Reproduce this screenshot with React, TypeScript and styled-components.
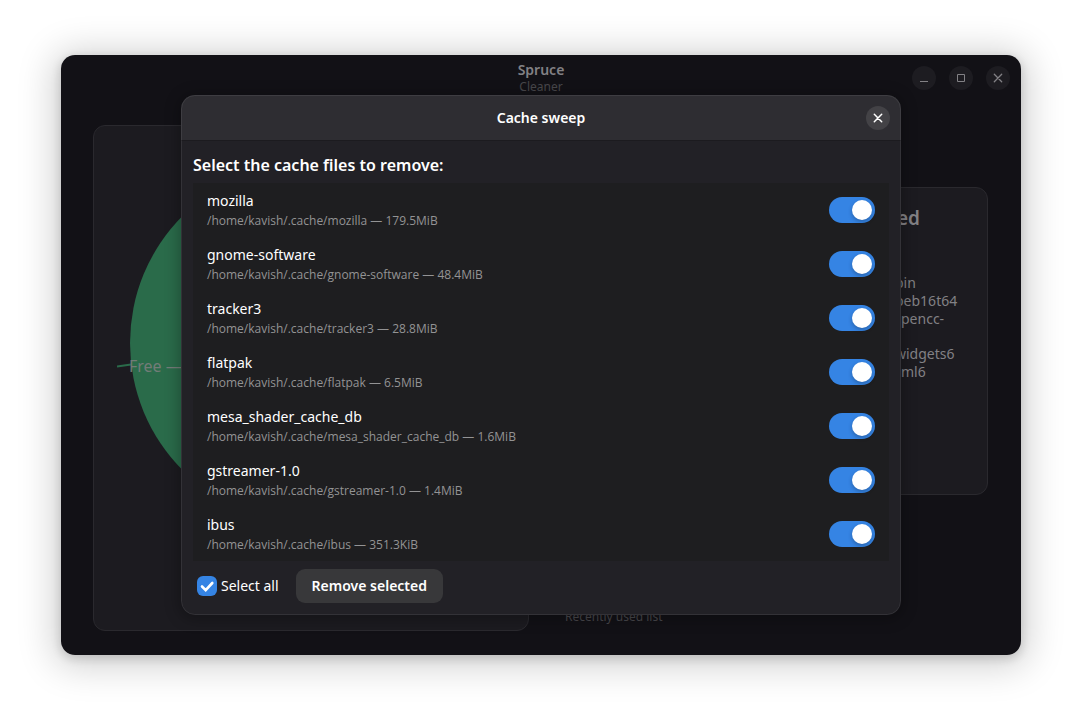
import React, { useState } from "react";
import styled, { createGlobalStyle, css } from "styled-components";

const Global = createGlobalStyle`
  * { box-sizing: border-box; }
  body {
    margin: 0;
    background: #fff;
    color: #fff;
    font: 15px/20px "Noto Sans", "Open Sans", sans-serif;
  }
  button, input { font: inherit; color: inherit; }
  h1, h2, h3, p, ul { margin: 0; padding: 0; }
`;

const strongText = css`
  font-family: "Noto Sans", "Open Sans", sans-serif;
  font-weight: 600;
`;

const Desktop = styled.div`
  padding: 55px 61px 67px;
`;

const Window = styled.div`
  display: grid;
  grid-template: minmax(600px, auto) / minmax(0, 1fr);
  overflow: hidden;
  border-radius: 14px;
  background: #121116;
`;

const WindowShadow = styled.div`
  border-radius: 14px;
  box-shadow: 0 3px 10px 1px rgba(0, 0, 0, 0.14), 0 4px 36px 8px rgba(0, 0, 0, 0.18);
`;

const AppLayer = styled.main`
  grid-area: 1 / 1;
  display: flex;
  flex-direction: column;
  padding-bottom: 24px;
`;

const TitleBar = styled.header`
  display: grid;
  grid-template-columns: 1fr auto 1fr;
  align-items: center;
  height: 46px;
  padding: 0 11px;
`;

const AppTitle = styled.div`
  grid-column: 2;
  text-align: center;
`;

const AppName = styled.h1`
  ${strongText}
  color: #828185;
  font-size: 14px;
  line-height: 18px;
`;

const AppSubtitle = styled.p`
  color: #48474b;
  font-size: 12px;
  line-height: 16px;
`;

const WindowButtons = styled.div`
  display: flex;
  justify-content: flex-end;
  gap: 13px;
`;

const RoundButton = styled.button<{ $bright?: boolean }>`
  display: grid;
  place-items: center;
  width: 24px;
  height: 24px;
  padding: 0;
  border: 0;
  border-radius: 50%;
  background: ${(p) => (p.$bright ? "#434246" : "#1d1c21")};
  color: ${(p) => (p.$bright ? "#fff" : "#828185")};
`;

const Columns = styled.div`
  flex: 1;
  display: grid;
  grid-template-columns: minmax(0, 436fr) minmax(0, 435fr);
  gap: 24px;
  padding: 24px 33px 0 32px;
`;

const cardLook = css`
  border: 1px solid #2a292e;
  border-radius: 12px;
  background: #1c1b20;
`;

const ChartCard = styled.section`
  ${cardLook}
  display: flex;
  justify-content: center;
  align-items: flex-start;
  padding-top: 36px;
`;

const Side = styled.div`
  display: flex;
  flex-direction: column;
  justify-content: space-between;
  padding-top: 62px;
`;

const PackageCard = styled.section`
  ${cardLook}
  height: 308px;
  padding: 18px 29px 0 0;
  color: #828185;
`;

const PackageTitle = styled.h2`
  ${strongText}
  padding-right: 38px;
  text-align: right;
  font-size: 19px;
  line-height: 24px;
`;

const PackageList = styled.ul`
  width: 63px;
  margin: 44px 0 0 auto;
  list-style: none;
  font-size: 14px;
  line-height: 18px;
`;

const PackageLine = styled.li<{ $gap?: boolean; $inset?: boolean }>`
  margin-top: ${(p) => (p.$gap ? "17px" : "0")};
  padding-left: ${(p) => (p.$inset ? "6px" : "0")};
  white-space: nowrap;
`;

const Hint = styled.p`
  padding: 0 12px 6px;
  color: #48474b;
  font-size: 12px;
  line-height: 16px;
`;

const Overlay = styled.div`
  grid-area: 1 / 1;
  z-index: 1;
  display: flex;
  justify-content: center;
  padding: 40px;
`;

const Dialog = styled.section`
  display: flex;
  flex-direction: column;
  width: 100%;
  max-width: 720px;
  overflow: hidden;
  border-radius: 14px;
  background: #222126;
  position: relative;
  box-shadow: 0 2px 14px 3px rgba(0, 0, 0, 0.25);

  &::after {
    content: "";
    position: absolute;
    inset: 0;
    border: 1px solid rgba(255, 255, 255, 0.08);
    border-radius: 14px;
    pointer-events: none;
  }
`;

const DialogHeader = styled.header`
  display: grid;
  grid-template-columns: 1fr auto 1fr;
  align-items: center;
  height: 46px;
  padding: 0 11px;
  border-bottom: 1px solid #1c1b1f;
  background: #2e2d32;
`;

const DialogTitle = styled.h2`
  ${strongText}
  grid-column: 2;
  font-size: 14px;
  line-height: 20px;
`;

const DialogClose = styled.div`
  display: flex;
  justify-content: flex-end;
`;

const DialogBody = styled.form`
  flex: 1;
  display: flex;
  flex-direction: column;
  padding: 12px;
`;

const Heading = styled.h3`
  ${strongText}
  padding-bottom: 6px;
  font-size: 16px;
  line-height: 24px;
`;

const CacheList = styled.ul`
  list-style: none;
  background: #1e1e20;
`;

const CacheRow = styled.li`
  display: flex;
  align-items: center;
  justify-content: space-between;
  height: 54px;
  padding: 0 14px;
`;

const CacheText = styled.div`
  padding-top: 2px;
`;

const CacheName = styled.label`
  display: block;
  font-size: 14px;
  line-height: 20px;
`;

const CachePath = styled.p`
  color: #939394;
  font-family: "Open Sans", "Noto Sans", sans-serif;
  font-size: 12px;
  line-height: 20px;
`;

const Switch = styled.input`
  appearance: none;
  flex: none;
  width: 46px;
  height: 26px;
  margin: 0;
  padding: 3px;
  border-radius: 13px;
  background: #4a494e;

  &::before {
    content: "";
    display: block;
    width: 20px;
    height: 20px;
    border-radius: 50%;
    background: #fff;
    box-shadow: 0 2px 4px rgba(0, 0, 0, 0.25);
  }
  &:checked { background: #3584e4; }
  &:checked::before { margin-left: auto; }
`;

const Footer = styled.footer`
  display: flex;
  align-items: center;
  gap: 17px;
  padding: 8px 4px 0;
`;

const SelectAll = styled.label`
  display: flex;
  align-items: center;
  gap: 4px;
  font-size: 14px;
`;

const CheckWrap = styled.span`
  display: grid;

  svg {
    grid-area: 1 / 1;
    pointer-events: none;
  }
`;

const Check = styled.input`
  grid-area: 1 / 1;
  appearance: none;
  width: 20px;
  height: 20px;
  margin: 0;
  border-radius: 6px;
  background: #4a494e;

  &:checked { background: #3584e4; }
  &:not(:checked) + svg { visibility: hidden; }
`;

const RemoveButton = styled.button`
  ${strongText}
  height: 34px;
  padding: 0 16px;
  border: 0;
  border-radius: 9px;
  background: #38383a;
  font-size: 14px;
`;

const caches = [
  { name: "mozilla", size: "179.5MiB" },
  { name: "gnome-software", size: "48.4MiB" },
  { name: "tracker3", size: "28.8MiB" },
  { name: "flatpak", size: "6.5MiB" },
  { name: "mesa_shader_cache_db", size: "1.6MiB" },
  { name: "gstreamer-1.0", size: "1.4MiB" },
  { name: "ibus", size: "351.3KiB" },
];

const CrossIcon = ({ weight = 1.5 }: { weight?: number }) => (
  <svg width="16" height="16" viewBox="0 0 16 16" fill="none" stroke="currentColor" strokeWidth={weight} strokeLinecap="round" aria-hidden="true">
    <path d="M4.3 4.3l7.4 7.4M11.7 4.3l-7.4 7.4" />
  </svg>
);

const DiskChart = () => (
  <svg width="388" height="362" viewBox="0 0 388 362" aria-label="Disk usage">
    <circle cx="193" cy="181" r="180" fill="#2a6b4a" />
    <path d="M0 204.5L14 202.5" stroke="#2a6b4a" strokeWidth="2" />
    <text x="12" y="210" fill="#737c78" fontSize="16">Free —</text>
  </svg>
);

export default function App() {
  const [selected, setSelected] = useState<string[]>(caches.map((c) => c.name));
  const toggle = (name: string) =>
    setSelected((s) => (s.includes(name) ? s.filter((n) => n !== name) : [...s, name]));
  const all = selected.length === caches.length;

  return (
    <Desktop>
      <Global />
      <WindowShadow>
        <Window>
          <AppLayer>
            <TitleBar>
              <AppTitle>
                <AppName>Spruce</AppName>
                <AppSubtitle>Cleaner</AppSubtitle>
              </AppTitle>
              <WindowButtons>
                <RoundButton aria-label="Minimize">
                  <svg width="16" height="16" viewBox="0 0 16 16" aria-hidden="true">
                    <path d="M4 11.5h8" stroke="currentColor" />
                  </svg>
                </RoundButton>
                <RoundButton aria-label="Maximize">
                  <svg width="16" height="16" viewBox="0 0 16 16" aria-hidden="true">
                    <path d="M4.5 4.5h7v7h-7z" fill="none" stroke="currentColor" />
                  </svg>
                </RoundButton>
                <RoundButton aria-label="Close window">
                  <CrossIcon weight={1.3} />
                </RoundButton>
              </WindowButtons>
            </TitleBar>
            <Columns>
              <ChartCard>
                <DiskChart />
              </ChartCard>
              <Side>
                <PackageCard>
                  <PackageTitle>ed</PackageTitle>
                  <PackageList>
                    <PackageLine>bin</PackageLine>
                    <PackageLine>beb16t64</PackageLine>
                    <PackageLine $inset>pencc-</PackageLine>
                    <PackageLine $gap>widgets6</PackageLine>
                    <PackageLine $inset>ml6</PackageLine>
                  </PackageList>
                </PackageCard>
                <Hint>Recently used list</Hint>
              </Side>
            </Columns>
          </AppLayer>
          <Overlay>
            <Dialog role="dialog" aria-labelledby="dialog-title">
              <DialogHeader>
                <DialogTitle id="dialog-title">Cache sweep</DialogTitle>
                <DialogClose>
                  <RoundButton $bright aria-label="Close">
                    <CrossIcon />
                  </RoundButton>
                </DialogClose>
              </DialogHeader>
              <DialogBody onSubmit={(e) => e.preventDefault()}>
                <Heading>Select the cache files to remove:</Heading>
                <CacheList>
                  {caches.map((c) => (
                    <CacheRow key={c.name}>
                      <CacheText>
                        <CacheName htmlFor={c.name}>{c.name}</CacheName>
                        <CachePath>
                          {`/home/kavish/.cache/${c.name} — ${c.size}`}
                        </CachePath>
                      </CacheText>
                      <Switch
                        id={c.name}
                        type="checkbox"
                        role="switch"
                        checked={selected.includes(c.name)}
                        onChange={() => toggle(c.name)}
                      />
                    </CacheRow>
                  ))}
                </CacheList>
                <Footer>
                  <SelectAll>
                    <CheckWrap>
                      <Check
                        type="checkbox"
                        checked={all}
                        onChange={() => setSelected(all ? [] : caches.map((c) => c.name))}
                      />
                      <svg width="20" height="20" viewBox="0 0 20 20" fill="none" aria-hidden="true">
                        <path d="M5 10.5l3.7 3.7L15.3 7" stroke="#fff" strokeWidth="2.6" strokeLinecap="round" />
                      </svg>
                    </CheckWrap>
                    Select all
                  </SelectAll>
                  <RemoveButton type="submit">Remove selected</RemoveButton>
                </Footer>
              </DialogBody>
            </Dialog>
          </Overlay>
        </Window>
      </WindowShadow>
    </Desktop>
  );
}
